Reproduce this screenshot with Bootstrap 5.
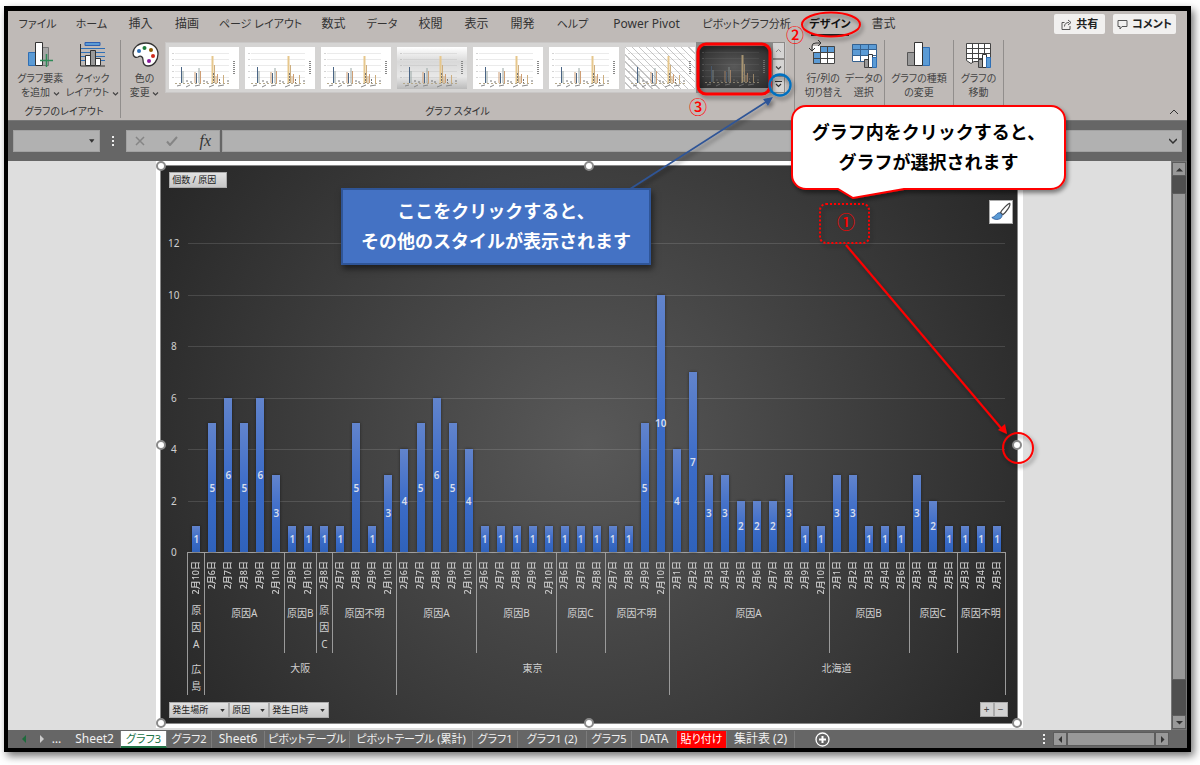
<!DOCTYPE html>
<html lang="ja">
<head>
<meta charset="utf-8">
<meta name="viewport" content="width=device-width, initial-scale=1">
<title>グラフ3</title>
<link rel="stylesheet" href="https://cdn.jsdelivr.net/npm/bootstrap@5.3.0/dist/css/bootstrap.min.css">
<script src="https://cdn.jsdelivr.net/npm/bootstrap@5.3.0/dist/js/bootstrap.bundle.min.js"></script>
<style>
body{background:#fff;font-family:"Noto Sans","Noto Sans CJK JP",sans-serif;font-size:12px;line-height:14px;color:#333;font-feature-settings:"palt";min-height:100vh;padding:6px 9px 13px 4px;display:flex;flex-direction:column;overflow:hidden}
button{font:inherit;font-feature-settings:inherit;color:inherit;border:0;background:none;padding:0}
a{color:inherit;text-decoration:none}
.xl-window{border:4px solid #000;border-top-width:5px;box-shadow:3px 4px 8px rgba(0,0,0,.55);background:#666;position:relative}
.ribbon{background:#bfbab7;height:110px;border-bottom:1px solid #777}
.ribbon-tabs{height:29px;padding:0 11px 0 13px}
.tab-grid{display:grid;grid-template-columns:33px 29px 23px 24px 77px 23px 28px 23px 23px 23px 31px 71px 83px 38px 23px;column-gap:23px}
.tab-link{white-space:nowrap;line-height:26px;display:flex;justify-content:center}
.ja{font-size:11px}
.tab-on{font-weight:700;color:#111;position:relative}
.tab-on::after{content:"";position:absolute;left:0;right:0;bottom:4px;height:2px;background:#222}
.top-btn{background:#f1f0ef;border-radius:2px;height:20px;min-width:51px;font-size:11px;font-weight:700;color:#222;margin-top:3px}
.grp{border-right:1px solid #918e8c;height:78px}
.big-btn{font-size:10px;line-height:14px;color:#444;white-space:nowrap;display:flex;flex-direction:column;align-items:center}
.big-btn svg{width:28px;height:28px;margin-bottom:3px}
.big-btn span svg{width:7px;height:7px;margin:0}
.cap{font-size:10px;line-height:14px;text-align:center;color:#333;margin-top:auto}
.gallery{background:#d5d4d3;height:51px;border:1px solid #c9c7c6;margin:2px 0 0 -3px;padding-left:3px}
.tiles{gap:6px;margin-right:1px}
.tile{width:70px;height:42px;background:#fff}
.tile svg{width:70px;height:42px;display:block}
.tile-fade{background:linear-gradient(#fff,#d9d9d9 35%,#e8e8e8 70%,#bbb)}
.tile-hatch{background:repeating-linear-gradient(45deg,#fff 0 4px,#c6c6c6 4px 5px)}
.tile-dark{background:radial-gradient(#595959,#2a2a2a)}
.tile-dark svg{opacity:.6}
.tile-on{background:#8c8a89;height:51px;width:76px;padding:4px 3px}
.more{width:13px;height:17px;border:1px solid #8c8a88;display:flex;align-items:center;justify-content:center}
.more svg{width:7px;height:7px}
.fbar{height:40px;padding:9px 5px 9px 5px;color:#eee}
.fbox{background:#b1b1b1;height:22px;border:1px solid #a2a2a2}
.fbox input{background:transparent;border:0;outline:0;min-width:0;width:100%;height:20px}
.fx{font-family:"Liberation Serif",serif;font-style:italic;font-size:16px;color:#333}
.work{background:#dedede;height:569px}
.chart-frame{width:74.5%;border:4px solid #fff;border-right-width:5px;height:567px}
.chart{background:radial-gradient(circle farthest-corner at center,#595959,#262626);border:1px solid #888;position:relative;padding:6px 12px 5px 8px;color:#d0d0d0;font-size:10px;line-height:14px;font-feature-settings:normal}
.knob{position:absolute;width:10px;height:10px;border-radius:50%;background:#fff;border:2px solid #8a8a8a;transform:translate(-50%,-50%)}
.fld{background:linear-gradient(#e2e2e2,#c6c6c6);border:1px solid #aaa;height:16px;color:#222;font-size:9px;line-height:12px;padding:0 3px 0 2px;display:inline-flex;align-items:center;justify-content:space-between}
.fld svg{width:5px;height:3px}
.side-btn{position:absolute;right:4px;width:24px;height:24px;background:#fff;border:1px solid #aaa;display:flex}
.plot-row{margin-top:55px;height:309px}
.yaxis{width:19px;font-size:10px;margin:-7px 0}
.yaxis span{width:9px;display:flex;justify-content:center;line-height:14px}
.plot{position:relative}
.lines{position:absolute;inset:0 0 -1px 0}
.lines i{height:1px;background:rgba(255,255,255,.13)}
.lines i:last-child{background:#a0a0a0}
.bars{position:absolute;inset:0}
.slot{flex:1 1 0;display:flex;justify-content:center;align-items:flex-end}
.bar-v{width:8px;background:linear-gradient(#6284cc,#3c6cc8 50%,#2f62bb);box-shadow:0 0 3px rgba(0,0,0,.5);display:flex;align-items:center;justify-content:center;font-weight:600;color:#d5dcec}
.axis-cat{margin-left:19px;height:143px;box-shadow:-1px 0 0 #9a9a9a}
.region{min-width:0;box-shadow:1px 0 0 #9a9a9a;display:flex;flex-direction:column}
.causes{height:101px;display:flex}
.cause{min-width:0;display:flex;flex-direction:column}
.cause:not(:last-child){box-shadow:1px 0 0 #9a9a9a}
.dates{height:54px;padding-top:9px;display:flex}
.dates span{flex:1 1 0;min-width:0;display:flex;justify-content:center}
.dates b{writing-mode:vertical-rl;text-orientation:sideways;transform:rotate(180deg);font-weight:500;font-size:9px;line-height:14px;white-space:nowrap;align-self:flex-start}
.cat{text-align:center;white-space:nowrap}
.cat-stack{display:flex;flex-direction:column;align-items:center;line-height:17px}
.cause .cat-stack{padding-top:2px}
.region-name{padding-top:8px}
.zoomer button{width:14px;height:15px;background:#d2d2d2;border:1px solid #aaa;color:#444;line-height:11px}
.vbar{width:16px;background:#4f4f4f;border:1px solid #777}
.sb{background:#999;border:1px solid #5c5c5c;display:flex;align-items:center;justify-content:center}
.vbar .sb-btn{height:14px}
.vthumb{margin-top:17px;height:487px}
.sb svg{width:7px;height:7px}
.sheets{height:18px;color:#f0f0f0;white-space:nowrap;padding:0 18px 0 14px}
.sheet-grid{display:grid;grid-template-columns:52px 46px 45px 53px 85px 123px 45px 69px 45px 45px 50px 68px}
.sheet{height:17px;line-height:16px;border-right:1px solid #7c7c7c;display:flex;justify-content:center}
.sheet-on{background:#fff;color:#217346;border-bottom:2px solid #217346}
.sheet-red{background:#f00;color:#fff;font-size:11px}
.dots-more{width:25px;text-align:center}
.hsb{height:14px}
.notes{position:absolute;left:-8px;top:-11px;width:1200px;height:765px;pointer-events:none;overflow:visible}
.note{position:absolute;font-size:18px;line-height:30px;font-weight:700;text-align:center;font-feature-settings:normal;white-space:nowrap;font-family:"Noto Sans CJK JP",sans-serif}
.note-blue{left:333px;top:177px;width:310px;height:77px;background:#4472c4;border:2px solid #2f5597;color:#fff;padding-top:5px;box-shadow:2px 4px 6px rgba(0,0,0,.5)}
.note-white{left:784px;top:105px;width:273px;color:#000}
</style>
</head>
<body>
<svg width="0" height="0" class="position-absolute" aria-hidden="true">
  <defs>
  <symbol id="mini" viewBox="0 0 70 42">
    <path d="M6 6.500H60M6 12.500H60M6 18.500H60M6 24.500H60M6 30.500H60" stroke="#999" stroke-opacity=".2"/>
    <path d="M6 36.500h54" stroke="#b5a98c" stroke-dasharray="2 2"/>
    <g fill="none" stroke-width="1">
      <path d="M12.500 20v16M27.500 26v10" stroke="#4a6585"/><path d="M14 24v12M30 21v15" stroke="#9aa8a6"/>
      <path d="M26 25v11M31.500 24v12M48.500 27v9" stroke="#cf9f76"/><path d="M43.500 9v27" stroke="#e6c78c" stroke-width="2"/>
      <path d="M45.500 18v18M47 29v7M54.500 28v8" stroke="#cdae80"/><path d="M44.500 26v10M50.500 32v4M18 33v3M22 34v2M35 33v3M38 34v2M59 33v3" stroke="#777" stroke-dasharray="2 1"/>
      <path d="M8 39l4-1M17 40l4-2M26 39l5-1M40 40l5-2M49 39l6-1" stroke="#888"/>
      <path d="M65 14v14" stroke="#888" stroke-width="2" stroke-dasharray="1 1"/><path d="M4 6v30" stroke="#aaa" stroke-dasharray="1 5"/>
    </g>
  </symbol>
  <symbol id="dn" viewBox="0 0 7 7"><path d="M1 2.500l2.500 2.500L6 2.500" fill="none" stroke="#444" stroke-width="1.200"/></symbol>
  <symbol id="tri" viewBox="0 0 6 4"><path d="M0 0h6L3 4z" fill="#333"/></symbol>
  </defs>
</svg>

<main class="xl-window flex-grow-1 d-flex flex-column">
  <header class="ribbon">
    <nav class="ribbon-tabs d-flex justify-content-between">
      <div class="tab-grid" id="tabs"></div>
      <div class="d-flex gap-2">
        <button class="top-btn px-1 d-flex align-items-center justify-content-center gap-1"><svg width="11" height="11" viewBox="0 0 11 11" fill="none" stroke="#555"><path d="M3.500 3.500H1v7h8V7M3.500 7.500C3.500 5 5 3.500 8 3.500M7 1l3 2.500L7 6"/></svg>共有</button>
        <button class="top-btn px-1 d-flex align-items-center justify-content-center gap-1"><svg width="11" height="11" viewBox="0 0 11 11" fill="none" stroke="#555"><path d="M1 1.500h9v6H5L3 10V7.500H1z"/></svg>コメント</button>
      </div>
    </nav>
    <div class="d-flex">
      <section class="grp d-flex flex-column" style="width:113px">
        <div class="d-flex justify-content-around ps-2">
          <button class="big-btn"><svg viewBox="0 0 28 28"><path d="M2.500 12.500h7v13h-7z" fill="#5b9bd5" stroke="#2f6fb5"/><path d="M16 7.500h6.500v18H16z" fill="#a5a5a5" stroke="#777"/><path d="M9.500 2.500h7v23h-7z" fill="#fff" stroke="#333"/><path d="M20.500 14v13M14 20.500h13" stroke="#2e8b57" stroke-width="1.500"/></svg><span>グラフ要素</span><span>を追加 <svg><use href="#dn"/></svg></span></button>
          <button class="big-btn"><svg viewBox="0 0 28 28"><path d="M7 2.500h15v3H7z" fill="#5b9bd5" stroke="#2f5fb0"/><path d="M3 8.500h24M3 12.500h24M3 16.500h24M3 20.500h24" stroke="#2f6fb5"/><path d="M2.500 4v22H27" fill="none" stroke="#333"/><path d="M7.500 15.500h5v10h-5zM17.500 18.500h5v7h-5z" fill="#fff" stroke="#333"/><path d="M12.500 10.500h5v15h-5z" fill="#999" stroke="#333"/></svg><span>クイック</span><span>レイアウト <svg><use href="#dn"/></svg></span></button>
        </div>
        <div class="cap">グラフのレイアウト</div>
      </section>
      <section class="grp d-flex flex-column" style="width:674px">
        <div class="d-flex">
          <button class="big-btn" style="width:47px"><svg viewBox="0 0 28 28"><path d="M15 3C7 3 2 8 2 13c0 4 3 5 5 4 3-2 5 0 5 3 0 4 2 6 5 6 6 0 10-6 10-12S22 3 15 3z" fill="#fff" stroke="#333" stroke-width="1.300"/><circle cx="8" cy="11" r="2" fill="#2f6fb5"/><circle cx="13.500" cy="8" r="2" fill="#1e7b3c"/><circle cx="20" cy="10" r="2" fill="#8a5a00"/><circle cx="22" cy="16" r="2" fill="#d02a1c"/><circle cx="18" cy="21" r="2" fill="#8a1a9a"/></svg><span>色の</span><span>変更 <svg><use href="#dn"/></svg></span></button>
          <div class="gallery d-flex align-items-center">
            <div class="tiles d-flex" id="tiles"></div>
            <div class="tile-on"><div class="tile tile-dark"><svg><use href="#mini"/></svg></div></div>
            <div class="d-flex flex-column">
              <button class="more" aria-label="前の行"><svg viewBox="0 0 7 7"><path d="M1 5l2.500-2.500L6 5" fill="none" stroke="#888"/></svg></button>
              <button class="more" aria-label="次の行"><svg><use href="#dn"/></svg></button>
              <button class="more" aria-label="その他"><svg viewBox="0 0 7 7"><path d="M0 .5h7M1 3l2.500 2.500L6 3" fill="none" stroke="#333" stroke-width="1.200"/></svg></button>
            </div>
          </div>
        </div>
        <div class="cap">グラフ スタイル</div>
      </section>
      <section class="grp d-flex justify-content-around align-items-start ps-2" style="width:90px">
        <button class="big-btn"><svg viewBox="0 0 28 28"><path d="M4 6h22v18H4z" fill="#fff"/><path d="M11 6h15v6H11zM4 12h7v12H4z" fill="#5b9bd5"/><path d="M4.500 12v11.500h21v-17H11M11.500 6.500v17M18.500 6.500v17M4.500 12.500h21M4.500 18.500h21" fill="none" stroke="#444"/><path d="M3 11V6q0-3 4-3h5M9 0l3 3-3 3M0 8l3 3 3-3" fill="none" stroke="#333"/></svg><span>行/列の</span><span>切り替え</span></button>
        <button class="big-btn"><svg viewBox="0 0 28 28"><path d="M2 4h24v18H2z" fill="#fff"/><path d="M2 4h16v12H2zM18 4h8v5h-8z" fill="#5b9bd5"/><path d="M2.500 4.500h24v17h-24zM10.500 4v18M18.500 4v18M2 9.500h24M2 15.500h24" fill="none" stroke="#35618f"/><path d="M14.500 19.500h4v8h-4z" fill="#999" stroke="#444"/><path d="M18.500 14.500h4v13h-4z" fill="#fff" stroke="#333"/><path d="M22.500 17.500h4v10h-4z" fill="#5b9bd5" stroke="#2f6fb5"/></svg><span>データの</span><span>選択</span></button>
      </section>
      <section class="grp d-flex justify-content-center align-items-start" style="width:69px">
        <button class="big-btn"><svg viewBox="0 0 28 28"><path d="M2.500 12.500h7v13h-7z" fill="#999" stroke="#555"/><path d="M17.500 7.500h7v18h-7z" fill="#5b9bd5" stroke="#2f6fb5"/><path d="M9.500 2.500h8v23h-8z" fill="#fff" stroke="#333"/></svg><span>グラフの種類</span><span>の変更</span></button>
      </section>
      <section class="grp d-flex justify-content-center align-items-start" style="width:50px">
        <button class="big-btn"><svg viewBox="0 0 28 28"><path d="M2.500 3.500h24v18H10l-3 2-4.500-3z" fill="#fff" stroke="#444"/><path d="M8.500 3v19M14.500 3v18M20.500 3v18M2 8.500h24M2 13.500h24M2 18.500h24" stroke="#444"/><path d="M14.500 19.500h4v8h-4z" fill="#999" stroke="#444"/><path d="M18.500 14.500h4v13h-4z" fill="#fff" stroke="#333"/><path d="M22.500 17.500h4v10h-4z" fill="#5b9bd5" stroke="#2f6fb5"/></svg><span>グラフの</span><span>移動</span></button>
      </section>
      <button class="ms-auto align-self-end pe-2" aria-label="リボンを折りたたむ"><svg width="10" height="7" viewBox="0 0 10 7"><path d="M1 6l4-4 4 4" fill="none" stroke="#333"/></svg></button>
    </div>
  </header>

  <div class="fbar d-flex align-items-center">
    <div class="fbox d-flex align-items-center pe-1" style="width:87px"><input aria-label="名前ボックス"><svg width="6" height="4"><use href="#tri"/></svg></div>
    <svg class="mx-2" width="10" height="12" viewBox="0 0 10 12" fill="#eee"><path d="M4 1h2v2H4zM4 5h2v2H4zM4 9h2v2H4z"/></svg>
    <div class="fbox d-flex align-items-center justify-content-between px-2" style="width:94px">
      <button aria-label="キャンセル"><svg class="d-block" width="10" height="10" viewBox="0 0 10 10"><path d="M1 1l8 8M9 1L1 9" stroke="#858585" stroke-width="1.500"/></svg></button>
      <button aria-label="入力"><svg class="d-block" width="12" height="10" viewBox="0 0 12 10"><path d="M1 5.500L4 9l7-8" fill="none" stroke="#858585" stroke-width="2"/></svg></button>
      <button class="fx" aria-label="関数の挿入">fx</button>
    </div>
    <div class="fbox flex-grow-1 d-flex align-items-center pe-1" style="margin-left:2px"><input aria-label="数式バー"><svg width="8" height="6" viewBox="0 0 8 6"><path d="M0 1l4 4 4-4" fill="none" stroke="#333" stroke-width="1.500"/></svg></div>
  </div>

  <div class="work d-flex flex-grow-1">
    <div class="flex-grow-1 d-flex justify-content-center">
      <div class="chart-frame d-flex flex-column">
        <div class="chart flex-grow-1 d-flex flex-column" id="chart">
          <div><button class="fld" style="width:58px">個数 / 原因</button></div>
          <button class="side-btn" style="top:0" aria-label="グラフ要素"></button>
          <button class="side-btn" style="top:34px" aria-label="グラフ スタイル"><svg viewBox="0 0 24 24"><path d="M21.500 2.500c-2 0-9 8-10 10l2.500 2.500c3-2 9-10 7.500-12.500z" fill="#fff" stroke="#444" stroke-width="1.300"/><path d="M11 13c-4-1-4 4-9 5 4 4 12 2 11-3z" fill="#5b9bd5" stroke="#2f5fa0"/></svg></button>
          <div class="plot-row d-flex">
            <div class="yaxis d-flex flex-column justify-content-between"><span>12</span><span>10</span><span>8</span><span>6</span><span>4</span><span>2</span><span>0</span></div>
            <div class="plot flex-grow-1">
              <div class="lines d-flex flex-column justify-content-between"><i></i><i></i><i></i><i></i><i></i><i></i><i></i></div>
              <div class="bars d-flex" id="bars"></div>
            </div>
          </div>
          <div class="axis-cat d-flex" id="cats"></div>
          <div class="d-flex justify-content-between mt-auto">
            <div class="d-flex">
              <button class="fld" style="width:60px">発生場所<svg><use href="#tri"/></svg></button>
              <button class="fld" style="width:40px">原因<svg><use href="#tri"/></svg></button>
              <button class="fld" style="width:60px">発生日時<svg><use href="#tri"/></svg></button>
            </div>
            <div class="zoomer d-flex" style="margin-right:-3px"><button>+</button><button>−</button></div>
          </div>
        </div>
      </div>
    </div>
    <div class="vbar d-flex flex-column">
      <div class="sb sb-btn"><svg viewBox="0 0 7 7"><path d="M0 5.500h7L3.500 2z" fill="#333"/></svg></div>
      <div class="sb vthumb"></div>
      <div class="sb sb-btn mt-auto"><svg viewBox="0 0 7 7"><path d="M0 2h7L3.500 5.500z" fill="#333"/></svg></div>
    </div>
  </div>

  <footer class="sheets d-flex align-items-center">
    <svg width="22" height="8" viewBox="0 0 22 8"><path d="M4 0v8L0 4z" fill="#1e6b3c"/><path d="M18 0v8l4-4z" fill="#ccc"/></svg>
    <span class="dots-more">…</span>
    <nav class="sheet-grid" id="sheets"></nav>
    <button class="ms-3 d-flex" aria-label="新しいシート"><svg class="ms-1" width="15" height="15" viewBox="0 0 15 15"><circle cx="7.500" cy="7.500" r="6.500" fill="none" stroke="#fff" stroke-width="1.300"/><path d="M7.500 4v7M4 7.500h7" stroke="#fff" stroke-width="2"/></svg></button>
    <svg class="ms-auto" width="10" height="12" viewBox="0 0 10 12" fill="#eee"><path d="M4 1h2v2H4zM4 5h2v2H4zM4 9h2v2H4z"/></svg>
    <div class="d-flex ms-1">
      <div class="sb hsb" style="width:14px"><svg viewBox="0 0 7 7"><path d="M5 0v7L1.500 3.500z" fill="#333"/></svg></div>
      <div class="sb hsb" style="width:88px"></div>
      <div class="sb hsb" style="width:14px"><svg viewBox="0 0 7 7"><path d="M2 0v7l3.500-3.500z" fill="#333"/></svg></div>
    </div>
  </footer>

  <svg class="notes" viewBox="0 0 1200 765">
    <defs><filter id="sh" x="-20%" y="-20%" width="150%" height="150%"><feDropShadow dx="2" dy="3" stdDeviation="2" flood-opacity=".45"/></filter></defs>
    <g filter="url(#sh)">
      <path d="M630 189L766 102" stroke="#2f5597" stroke-width="1.600"/><path d="M773 97l-5 9-5-7z" fill="#2f5597"/>
      <ellipse cx="831" cy="24.500" rx="29" ry="12" fill="none" stroke="#f00" stroke-width="2"/>
      <rect x="698" y="44" width="72" height="50" rx="8" fill="none" stroke="#f00" stroke-width="3"/>
      <circle cx="780" cy="85" r="10.500" fill="none" stroke="#0070c0" stroke-width="2.300"/>
      <path d="M806 106h245a14 14 0 0 1 14 14v55a14 14 0 0 1-14 14H904l-51 9-15-9h-32a14 14 0 0 1-14-14v-55a14 14 0 0 1 14-14z" fill="#fff" stroke="#f00" stroke-width="2"/>
      <rect x="820" y="204" width="49" height="39" rx="6" fill="none" stroke="#f00" stroke-width="2" stroke-dasharray="2 2"/>
      <path d="M846 245L1001 428" stroke="#f00" stroke-width="2"/><path d="M1007 434l-9-4 7-6z" fill="#f00"/>
      <circle cx="1018" cy="448" r="15" fill="none" stroke="#f00" stroke-width="2"/>
    </g>
    <g fill="#f00" font-family="Noto Sans CJK JP, sans-serif" font-size="18" font-weight="500" text-anchor="middle"><text x="846" y="229">①</text><text x="795" y="42">②</text><text x="698" y="114">③</text></g>
  </svg>
  <div class="note note-blue">ここをクリックすると、<br>その他のスタイルが表示されます</div>
  <div class="note note-white">グラフ内をクリックすると、<br>グラフが選択されます</div>
</main>

<script>
const el = (p, tag, cls, txt) => { const e = document.createElement(tag); if (cls) e.className = cls; if (txt !== undefined) e.textContent = txt; p.append(e); return e; };
const $ = id => document.getElementById(id);
const size = t => /[ァ-ヶー]/.test(t) ? ' ja' : '';

['ファイル','ホーム','挿入','描画','ページ レイアウト','数式','データ','校閲','表示','開発','ヘルプ','Power Pivot','ピボットグラフ分析','デザイン','書式'].forEach(t => {
  el($('tabs'), 'a', 'tab-link' + size(t) + (t === 'デザイン' ? ' tab-on' : ''), t).href = '#';
});
['','','','tile-fade','','','tile-hatch'].forEach(c => { el($('tiles'), 'div', 'tile ' + c).innerHTML = '<svg><use href="#mini"/></svg>'; });
['Sheet2','グラフ3','グラフ2','Sheet6','ピボットテーブル','ピボットテーブル (累計)','グラフ1','グラフ1 (2)','グラフ5','DATA','貼り付け','集計表 (2)'].forEach(t => {
  el($('sheets'), 'a', 'sheet' + size(t) + (t === 'グラフ3' ? ' sheet-on' : t === '貼り付け' ? ' sheet-red' : ''), t).href = '#';
});

// region -> cause -> [day in February, count]
const data = [
  ['広島', [['原因A', [[10,1]]]]],
  ['大阪', [['原因A', [[6,5],[7,6],[8,5],[9,6],[10,3]]], ['原因B', [[9,1],[10,1]]], ['原因C', [[8,1]]], ['原因不明', [[7,1],[8,5],[9,1],[10,3]]]]],
  ['東京', [['原因A', [[6,4],[7,5],[8,6],[9,5],[10,4]]], ['原因B', [[6,1],[7,1],[8,1],[9,1],[10,1]]], ['原因C', [[6,1],[7,1],[8,1]]], ['原因不明', [[7,1],[8,1],[9,5],[10,10]]]]],
  ['北海道', [['原因A', [[1,4],[2,7],[3,3],[4,3],[5,2],[6,2],[7,2],[8,3],[9,1],[10,1]]], ['原因B', [[1,3],[2,3],[3,1],[4,1],[6,1]]], ['原因C', [[3,3],[4,2],[5,1]]], ['原因不明', [[3,1],[4,1],[5,1]]]]]
];
const name = (p, t, n, cls) => {
  if (n > 1) return el(p, 'div', 'cat ' + cls, t);
  const s = el(p, 'div', 'cat cat-stack ' + cls);
  [...t].forEach(c => el(s, 'span', '', c));
};
data.forEach(([region, causes]) => {
  const total = causes.reduce((a, c) => a + c[1].length, 0);
  const r = el($('cats'), 'div', 'region'); r.style.flex = total + ' 1 0';
  const row = el(r, 'div', 'causes');
  causes.forEach(([cause, days]) => {
    const c = el(row, 'div', 'cause'); c.style.flex = days.length + ' 1 0';
    const d = el(c, 'div', 'dates');
    days.forEach(([day, v]) => {
      el(el(d, 'span'), 'b', '', '2月' + day + '日');
      const b = el(el($('bars'), 'div', 'slot'), 'div', 'bar-v', v);
      b.style.height = v / 12 * 100 + '%';
    });
    name(c, cause, days.length, '');
  });
  name(r, region, total, 'region-name');
});
[[0,0],[50,0],[100,0],[0,50],[100,50],[0,100],[50,100],[100,100]].forEach(([x, y]) => {
  const k = el($('chart'), 'i', 'knob'); k.style.left = x + '%'; k.style.top = y + '%';
});
</script>
</body>
</html>
